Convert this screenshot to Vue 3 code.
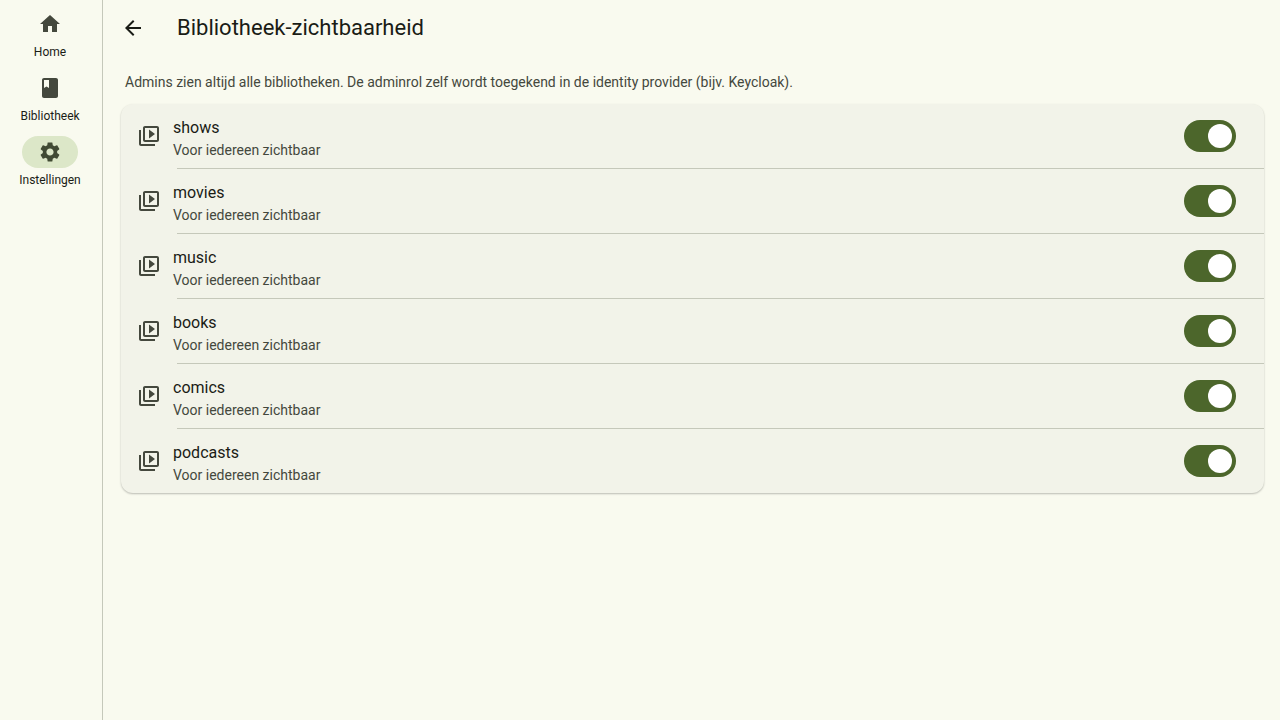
<script setup>
import { reactive } from 'vue'

const navItems = [
  { label: 'Home', icon: 'M10 20v-6h4v6h5v-8h3L12 3 2 12h3v8z' },
  {
    label: 'Bibliotheek',
    icon: 'M18 2H6c-1.1 0-2 .9-2 2v16c0 1.1.9 2 2 2h12c1.1 0 2-.9 2-2V4c0-1.100-.9-2-2-2zM6 4h5v8l-2.500-1.500L6 12V4z',
  },
  {
    label: 'Instellingen',
    icon: 'M19.140 12.940c.040-.300.060-.610.060-.940 0-.320-.020-.640-.070-.940l2.030-1.580c.180-.140.230-.410.120-.610l-1.920-3.320c-.120-.220-.370-.290-.590-.220l-2.390.960c-.500-.380-1.030-.700-1.620-.940l-.360-2.540c-.040-.240-.240-.410-.480-.410h-3.840c-.240 0-.430.170-.470.410l-.360 2.540c-.590.240-1.130.570-1.620.940l-2.390-.960c-.220-.080-.470 0-.590.220L2.740 8.870c-.120.210-.080.470.120.610l2.030 1.580c-.050.300-.090.630-.090.940s.020.640.070.940l-2.030 1.580c-.180.140-.230.410-.120.610l1.920 3.320c.120.220.370.290.590.220l2.390-.960c.500.380 1.030.700 1.620.940l.360 2.540c.050.240.240.410.480.410h3.840c.240 0 .440-.170.470-.410l.360-2.540c.590-.240 1.130-.560 1.620-.940l2.390.960c.220.080.470 0 .590-.220l1.920-3.320c.120-.220.070-.470-.120-.610l-2.010-1.580zM12 15.600c-1.980 0-3.600-1.620-3.600-3.600s1.620-3.600 3.600-3.600 3.600 1.620 3.600 3.600-1.620 3.600-3.600 3.600z',
    active: true,
  },
]

const libraries = reactive(
  ['shows', 'movies', 'music', 'books', 'comics', 'podcasts'].map((name) => ({ name, visible: true })),
)
</script>

<template>
  <div class="app">
    <nav class="rail">
      <a
        v-for="item in navItems"
        :key="item.label"
        href="#"
        class="rail-item"
        :class="{ active: item.active }"
        :aria-current="item.active ? 'page' : undefined"
      >
        <span class="indicator">
          <svg viewBox="0 0 24 24" aria-hidden="true"><path :d="item.icon" /></svg>
        </span>
        <span>{{ item.label }}</span>
      </a>
    </nav>

    <main class="content">
      <header class="bar">
        <button type="button" class="back" aria-label="Terug">
          <svg viewBox="0 0 24 24" aria-hidden="true">
            <path d="M20 11H7.830l5.590-5.590L12 4l-8 8 8 8 1.410-1.410L7.830 13H20v-2z" />
          </svg>
        </button>
        <h1>Bibliotheek-zichtbaarheid</h1>
      </header>

      <p class="intro">
        Admins zien altijd alle bibliotheken. De adminrol zelf wordt toegekend in de identity provider (bijv. Keycloak).
      </p>

      <ul class="card">
        <li v-for="library in libraries" :key="library.name">
          <label class="row" :for="'library-' + library.name">
            <svg viewBox="0 0 24 24" aria-hidden="true">
              <path
                d="M4 6H2v14c0 1.100.9 2 2 2h14v-2H4V6zm16-4H8c-1.100 0-2 .9-2 2v12c0 1.100.9 2 2 2h12c1.100 0 2-.9 2-2V4c0-1.100-.9-2-2-2zm0 14H8V4h12v12zM12 5.500v9l6-4.500z"
              />
            </svg>
            <span class="texts">
              <span class="name">{{ library.name }}</span>
              <span class="status">Voor iedereen zichtbaar</span>
            </span>
            <input :id="'library-' + library.name" v-model="library.visible" type="checkbox" role="switch" class="switch" />
          </label>
        </li>
      </ul>
    </main>
  </div>
</template>

<style>
body {
  background: #f9faef;
}
</style>

<style scoped>
.app {
  display: flex;
  min-height: 100vh;
  background: #f9faef;
  color: #1a1c16;
  font-family: Roboto, sans-serif;
}

svg {
  display: block;
  flex: none;
  width: 24px;
  height: 24px;
  fill: currentColor;
}

.rail {
  box-sizing: border-box;
  flex: none;
  display: flex;
  flex-direction: column;
  gap: 12px;
  width: 103px;
  padding: 8px 2px 8px 0;
  border-right: 1px solid #c5c8ba;
}

.rail-item {
  display: flex;
  flex-direction: column;
  align-items: center;
  gap: 4px;
  color: #1a1c16;
  font-size: 12px;
  line-height: 16px;
  text-decoration: none;
}

.indicator {
  display: flex;
  align-items: center;
  justify-content: center;
  width: 56px;
  height: 32px;
  border-radius: 16px;
  color: #44483d;
}

.active .indicator {
  background: #dce7c8;
  color: #404a33;
}

.content {
  flex: 1;
  min-width: 0;
  padding: 0 16px 16px 18px;
}

.bar {
  display: flex;
  align-items: center;
  gap: 32px;
  height: 56px;
}

.back {
  padding: 0;
  border: 0;
  background: none;
  color: #1a1c16;
  cursor: pointer;
}

h1 {
  margin: 0;
  font-size: 22px;
  font-weight: 400;
  line-height: 28px;
}

.intro {
  margin: 16px 4px 12px;
  color: #44483d;
  font-size: 14px;
  line-height: 20px;
}

.card {
  margin: 0;
  padding: 0;
  list-style: none;
  background: #f2f3e9;
  border-radius: 12px;
  box-shadow: 0 1px 2px rgba(0, 0, 0, 0.25);
}

li + li {
  position: relative;
  padding-top: 1px;
}

li + li::before {
  content: '';
  position: absolute;
  top: 0;
  right: 0;
  left: 56px;
  height: 1px;
  background: #c5c8ba;
}

.row {
  display: flex;
  align-items: center;
  gap: 12px;
  padding: 8px 28px 8px 16px;
  color: #44483d;
  cursor: pointer;
}

.texts {
  flex: 1;
  display: flex;
  flex-direction: column;
  padding-top: 4px;
}

.name {
  color: #1a1c16;
  font-size: 16px;
  line-height: 24px;
}

.status {
  font-size: 14px;
  line-height: 20px;
}

.switch {
  appearance: none;
  display: flex;
  align-items: center;
  box-sizing: border-box;
  width: 52px;
  height: 32px;
  margin: 0;
  padding: 4px;
  border-radius: 16px;
  background: #c5c8ba;
  cursor: pointer;
}

.switch::before {
  content: '';
  width: 24px;
  height: 24px;
  border-radius: 50%;
  background: #ffffff;
}

.switch:checked {
  justify-content: flex-end;
  background: #4c662b;
}
</style>
